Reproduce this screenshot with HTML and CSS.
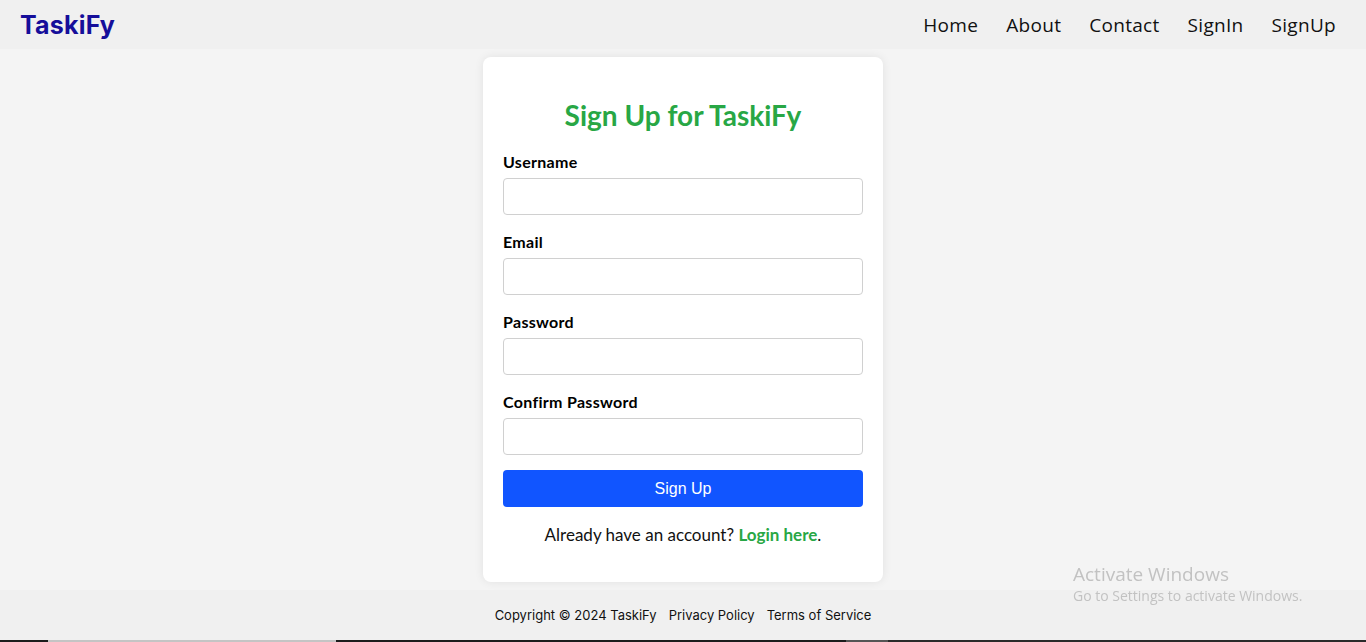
FILE: index.html
```html
<!DOCTYPE html>
<html lang="en">
<head>
<meta charset="utf-8">
<title>TaskiFy - Sign Up</title>
<link rel="stylesheet" href="styles.css">
</head>
<body>
<header class="topbar">
  <a class="logo" href="#">TaskiFy</a>
  <nav class="nav">
    <a href="#">Home</a>
    <a href="#">About</a>
    <a href="#">Contact</a>
    <a href="#">SignIn</a>
    <a href="#">SignUp</a>
  </nav>
</header>
<main class="main">
  <section class="card">
    <h2 class="title">Sign Up for TaskiFy</h2>
    <form class="form">
      <div class="group">
        <label for="u">Username</label>
        <input id="u" type="text">
      </div>
      <div class="group">
        <label for="e">Email</label>
        <input id="e" type="email">
      </div>
      <div class="group">
        <label for="p">Password</label>
        <input id="p" type="password">
      </div>
      <div class="group">
        <label for="c">Confirm Password</label>
        <input id="c" type="password">
      </div>
      <button type="button" class="btn">Sign Up</button>
    </form>
    <p class="alt">Already have an account? <a href="#">Login here</a>.</p>
  </section>
</main>
<footer class="footer">
  <span>Copyright © 2024 TaskiFy</span>
  <a href="#">Privacy Policy</a>
  <a href="#">Terms of Service</a>
</footer>
<div class="taskbar">
  <span class="tb-dark a"></span><span class="tb-light"></span><span class="tb-dark b"></span><span class="tb-mid"></span><span class="tb-dark c"></span>
</div>
<div class="watermark">
  <div class="wm-title">Activate Windows</div>
  <div class="wm-sub">Go to Settings to activate Windows.</div>
</div>
</body>
</html>
```
FILE: styles.css
```css
* { box-sizing: border-box; }
html, body { margin: 0; padding: 0; }
body {
  height: 642px;
  display: flex;
  flex-direction: column;
  background: #f4f4f4;
  font-family: "Comic Sans MS", "Lato", "Noto Sans", sans-serif;
  overflow: hidden;
}
.topbar {
  flex-shrink: 0;
  height: 49px;
  background: #f0f0f0;
  display: flex;
  align-items: center;
  justify-content: space-between;
  padding: 0 30px 0 20px;
  font-family: "Inter", "Noto Sans", sans-serif;
}
.logo {
  color: #150e9a;
  font-weight: 700;
  font-size: 25px;
  text-decoration: none;
  letter-spacing: 0.2px;
}
.nav { display: flex; gap: 28px; }
.nav a {
  color: #111;
  text-decoration: none;
  font-family: "Open Sans", "Noto Sans", sans-serif;
  font-size: 19px;
  font-weight: 400;
  letter-spacing: 0.3px;
}
.main {
  flex: 1;
  display: flex;
  justify-content: center;
  align-items: flex-start;
  padding-top: 8px;
}
.card {
  width: 400px;
  background: #fff;
  border-radius: 8px;
  box-shadow: 0 0 10px rgba(0,0,0,0.08);
  padding: 20px 20px 37px;
}
.title {
  margin: 21px 0 20px;
  text-align: center;
  color: #28a745;
  font-size: 28px;
  line-height: 34px;
  font-weight: 700;
}
.form { display: flex; flex-direction: column; }
.group {
  display: flex;
  flex-direction: column;
  margin-bottom: 17px;
}
.group:nth-child(4) { margin-bottom: 15px; }
.group label {
  font-weight: 700;
  font-size: 16px;
  line-height: 20px;
  color: #000;
  margin-bottom: 6px;
  letter-spacing: 0.3px;
}
.group input {
  height: 37px;
  border: 1px solid #d0d0d0;
  border-radius: 4px;
  padding: 8px;
  font-size: 15px;
  background: #fff;
}
.btn {
  height: 37px;
  border: none;
  border-radius: 4px;
  background: #1155ff;
  color: #fff;
  font-family: "Liberation Sans", Arial, sans-serif;
  font-size: 16px;
  cursor: pointer;
}
.alt {
  margin: 18px 0 0;
  text-align: center;
  font-size: 17px;
  line-height: 20px;
  color: #111;
}
.alt a {
  color: #28a745;
  font-weight: 700;
  text-decoration: none;
}
.footer {
  flex-shrink: 0;
  height: 50px;
  background: #f0f0f0;
  display: flex;
  justify-content: center;
  align-items: center;
  gap: 12px;
  font-family: "Inter", "Noto Sans", sans-serif;
  font-size: 13px;
  color: #111;
  padding-bottom: 1px;
}
.footer a { color: #111; text-decoration: none; }
.taskbar { flex-shrink: 0; height: 2px; display: flex; }
.tb-dark { background: #1c1c1c; }
.tb-dark.a { width: 48px; }
.tb-light { width: 288px; background: #c4c4c4; }
.tb-dark.b { width: 510px; }
.tb-mid { width: 42px; background: #555; }
.tb-dark.c { flex: 1; background: #2a2a2a; }
.watermark {
  position: fixed;
  left: 1073px;
  top: 562px;
  color: #c2c2c2;
  font-family: "Open Sans", "Noto Sans", sans-serif;
  pointer-events: none;
}
.wm-title { font-size: 19px; line-height: 24px; }
.wm-sub { font-size: 14px; line-height: 20px; }
```
